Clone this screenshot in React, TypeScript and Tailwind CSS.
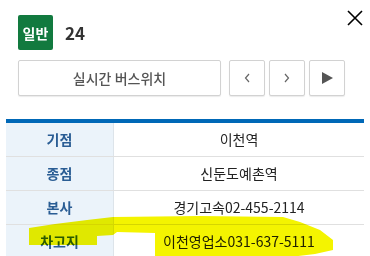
import React from 'react';

const ROWS: [string, string][] = [
  ['기점', '이천역'],
  ['종점', '신둔도예촌역'],
  ['본사', '경기고속02-455-2114'],
  ['차고지', '이천영업소031-637-5111'],
];

const FONT = { fontFamily: '"Noto Sans CJK KR", "Noto Sans", sans-serif' };

function NavButton({ children }: { children: React.ReactNode }) {
  return (
    <button className="w-[36px] h-[36px] flex items-center justify-center bg-white border border-[#d2d2d2] rounded-[2px] shadow-[0_1px_1px_rgba(0,0,0,0.08)]">
      {children}
    </button>
  );
}

export default function App() {
  return (
    <div className="relative w-[370px] h-[256px] overflow-hidden bg-white" style={FONT}>
      {/* Header */}
      <div className="flex items-start pl-[18px] pr-[7px] pt-[10px]">
        <div className="mt-[5px] w-[35px] h-[35px] rounded-[2px] bg-[#127a3f] flex items-center justify-center text-white text-[14px] font-bold leading-none">
          일반
        </div>
        <div className="mt-[5px] ml-[12px] h-[35px] flex items-center text-[17px] font-bold text-[#333]">24</div>
        <button className="ml-auto w-[16px] h-[16px]">
          <svg viewBox="0 0 16 16" className="w-[16px] h-[16px]" stroke="#000" strokeWidth="1.6" fill="none">
            <path d="M1 1 L15 15 M15 1 L1 15" />
          </svg>
        </button>
      </div>

      {/* Buttons */}
      <div className="flex items-center pl-[18px] mt-[10px] h-[36px]">
        <button className="w-[203px] h-[36px] bg-white border border-[#d2d2d2] rounded-[2px] shadow-[0_1px_1px_rgba(0,0,0,0.08)] text-[14px] font-medium text-[#555]">
          실시간 버스위치
        </button>
        <div className="flex gap-[4px] ml-[8px]">
          <NavButton>
            <svg viewBox="0 0 6 10" className="w-[6px] h-[10px]" stroke="#666" strokeWidth="1.2" fill="none">
              <path d="M5 1 L1.5 5 L5 9" />
            </svg>
          </NavButton>
          <NavButton>
            <svg viewBox="0 0 6 10" className="w-[6px] h-[10px]" stroke="#666" strokeWidth="1.2" fill="none">
              <path d="M1 1 L4.5 5 L1 9" />
            </svg>
          </NavButton>
          <NavButton>
            <svg viewBox="0 0 11 12" className="w-[11px] h-[12px]">
              <path d="M0 0 L11 6 L0 12 Z" fill="#555" />
            </svg>
          </NavButton>
        </div>
      </div>

      {/* Table */}
      <div className="mx-[6px] mt-[23px] border-t-[4px] border-[#0068b7]">
        {ROWS.map(([label, value]) => (
          <div key={label} className="flex h-[34px] border-b border-[#e0e0e0]">
            <div className="w-[108px] shrink-0 bg-[#ebf3fa] border-r border-[#dde4ea] flex items-center justify-center text-[14px] font-bold text-[#2a5d94]">
              {label}
            </div>
            <div className="flex-1 flex items-center justify-center text-[14px] text-[#222]">{value}</div>
          </div>
        ))}
      </div>

      {/* Highlighter stroke */}
      <svg className="absolute left-0 top-0 w-[370px] h-[256px] pointer-events-none mix-blend-multiply" viewBox="0 0 370 256">
        <path
          d="M29 228 L55 224 L87 220 L113 217 L200 216 L283 217 L300 222 L320 230 L333 240 L333 250 L315 254 L290 257 L155 257 L155 233 L117 232 L113 235 L97 236 L97 245 L29 245 Z"
          fill="#f4f400"
        />
      </svg>
    </div>
  );
}
